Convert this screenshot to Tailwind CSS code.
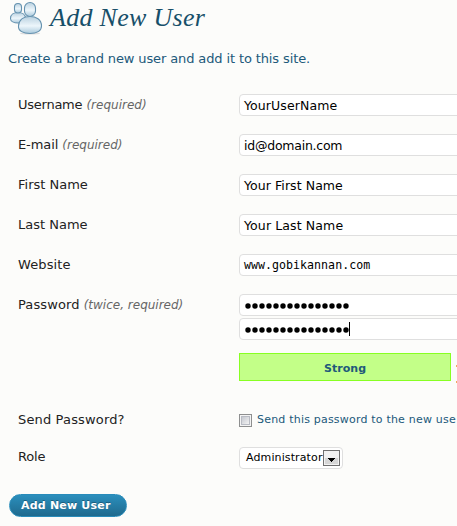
<!DOCTYPE html>
<html lang="en">
<head>
<meta charset="utf-8">
<title>Add New User</title>
<script src="https://cdn.jsdelivr.net/npm/@tailwindcss/browser@4"></script>
</head>
<body class="w-[457px] h-[526px] overflow-hidden bg-[#fcfcfa] font-['DejaVu_Sans',sans-serif] text-[12px] text-[#222]">
<header class="flex h-[38px] pl-[9px]">
  <svg class="w-[34px] h-[36px] shrink-0" viewBox="0 0 34 36">
    <defs>
      <linearGradient id="g" x1="0" y1="0" x2="0" y2="1"><stop offset="0" stop-color="#b9d1e0"/><stop offset=".55" stop-color="#edf6fb"/><stop offset="1" stop-color="#a9c9dc"/></linearGradient>
    </defs>
    <ellipse cx="21" cy="33.5" rx="10" ry="1" fill="#ddd"/>
    <g fill="url(#g)" stroke="#6592af" stroke-width="1.1">
      <path d="M1.500 18.500C1.500 14.500 5 12.500 9 12.500s7.500 2 7.500 6-3.500 4.500-7.500 4.500-7.500-1.500-7.500-4.500z"/>
      <rect x="5.500" y="3.500" width="7" height="9.500" rx="3.500"/>
      <path d="M9.500 26C10 19.500 15 16.500 21 16.500s11.500 3 11.500 9.500c0 5-5 7.500-11.500 7.500S9 31 9.500 26z"/>
      <rect x="15.500" y="2.500" width="11" height="14" rx="5.500"/>
    </g>
  </svg>
  <h1 class="ml-[7px] mt-[2px] font-['Liberation_Serif',serif] italic text-[26px] leading-[32px] tracking-[0.3px] whitespace-nowrap text-[#174f69]">Add New User</h1>
</header>
<p class="h-[46px] pl-[8px] pt-[12px] leading-[17px] text-[13px] tracking-[-0.120px] whitespace-nowrap text-[#21597a]">Create a brand new user and add it to this site.</p>
<main class="grid grid-cols-[221px_218px] grid-rows-[40px_40px_40px_40px_40px_109px_38px_42px] overflow-hidden pl-[18px] text-[13px] leading-[16px] whitespace-nowrap">
  <div class="pt-[13px]"><span class="tracking-[-0.250px]">Username</span> <i class="text-[12px] text-[#666]">(required)</i></div>
  <div class="pt-[10px]"><div class="h-[22px] w-[240px] rounded-[4px] border border-[#dfdfdf] bg-white pl-[4px] text-[12.500px] leading-[22px] tracking-[0.100px] text-black">YourUserName</div></div>
  <div class="pt-[13px]"><span class="tracking-[-0.100px]">E-mail</span> <i class="text-[12px] text-[#666]">(required)</i></div>
  <div class="pt-[10px]"><div class="h-[22px] w-[240px] rounded-[4px] border border-[#dfdfdf] bg-white pl-[4px] text-[12.500px] leading-[22px] tracking-[-0.240px] text-black">id@domain.com</div></div>
  <div class="pt-[13px]">First Name</div>
  <div class="pt-[10px]"><div class="h-[22px] w-[240px] rounded-[4px] border border-[#dfdfdf] bg-white pl-[4px] text-[12.500px] leading-[22px] tracking-[0.070px] text-black">Your First Name</div></div>
  <div class="pt-[13px]">Last Name</div>
  <div class="pt-[10px]"><div class="h-[22px] w-[240px] rounded-[4px] border border-[#dfdfdf] bg-white pl-[4px] text-[12.500px] leading-[22px] tracking-[0.120px] text-black">Your Last Name</div></div>
  <div class="pt-[13px] tracking-[0.100px]">Website</div>
  <div class="pt-[10px]"><div class="h-[22px] w-[240px] rounded-[4px] border border-[#dfdfdf] bg-white pl-[4px] font-['DejaVu_Sans_Mono',monospace] text-[11.600px] leading-[20px] tracking-[0.030px] text-black">www.gobikannan.com</div></div>
  <div class="pt-[13px]"><span class="tracking-[0.100px]">Password</span> <i class="text-[12px] text-[#666]">(twice, required)</i></div>
  <div class="flex flex-col gap-[2px] pt-[10px]">
    <div class="flex h-[22px] w-[240px] shrink-0 items-center rounded-[4px] border border-[#dfdfdf] bg-white pl-[5px] pt-[2px]">
      <svg class="h-[6px] w-[105px]" viewBox="0 0 105 6"><path d="M3 3H102" stroke="#000" stroke-width="5.400" stroke-linecap="round" stroke-dasharray="0 7"/></svg>
    </div>
    <div class="flex h-[22px] w-[240px] shrink-0 items-center rounded-[4px] border border-[#dfdfdf] bg-white pl-[5px]">
      <svg class="mt-[2px] h-[6px] w-[104px] shrink-0" viewBox="0 0 104 6"><path d="M3 3H102" stroke="#000" stroke-width="5.400" stroke-linecap="round" stroke-dasharray="0 7"/></svg>
      <span class="h-[14px] w-px bg-black"></span>
    </div>
    <div class="mt-[11px] flex items-start">
      <div class="h-[28px] w-[212px] shrink-0 border border-[#8f2] bg-[#c3ff88] pt-[1px] text-center text-[11px] leading-[28px] font-bold tracking-[0.050px] text-[#21597a]">Strong</div>
      <div class="ml-[5px] mt-[12px] h-[18px] w-px shrink-0 border-y-2 border-[#f3a860]"></div>
    </div>
  </div>
  <div class="pt-[19px] tracking-[0.150px]">Send Password?</div>
  <div class="flex items-start pt-[17px] text-[#21597a]">
    <span class="mt-[4px] h-[13px] w-[13px] shrink-0 border border-[#8e8f8f] bg-[#f4f4f4] p-px"><span class="block h-full w-full border border-[#b9bcc4] bg-linear-to-br from-[#c6c9d0] to-[#f3f3f3]"></span></span>
    <span class="ml-[5px] text-[11px] leading-[19px] tracking-[0.200px]">Send this password to the new use</span>
  </div>
  <div class="pt-[18px] tracking-[-0.200px]">Role</div>
  <div class="pt-[16px]">
    <div class="flex h-[22px] w-[104px] items-center justify-between rounded-[4px] border border-[#dfdfdf] bg-white pl-[6px] pr-[2px] text-[11px] leading-[20px] tracking-[0.120px] text-black">
      <span>Administrator</span>
      <svg class="h-[16px] w-[17px] shrink-0" viewBox="0 0 17 16"><rect x=".5" y=".5" width="16" height="15" fill="#f2f2f2" stroke="#707070"/><path d="M2 8h13v6H2z" fill="#d6d6d6"/><path d="M5 8h7v1h-1v1h-1v1H9v1H8v-1H7v-1H6V9H5z" fill="#000"/></svg>
    </div>
  </div>
</main>
<footer class="pl-[9px] pt-[21px]">
  <button class="block h-[23px] w-[118px] rounded-[11.500px] border border-[#298cba] bg-linear-to-b from-[#2b8fbd] to-[#1f6a8e] pl-[11px] text-left text-[11px] leading-[22px] font-bold tracking-[0.200px] whitespace-nowrap text-white [text-shadow:0_-1px_0_rgba(0,0,0,.3)]">Add New User</button>
</footer>
</body>
</html>
